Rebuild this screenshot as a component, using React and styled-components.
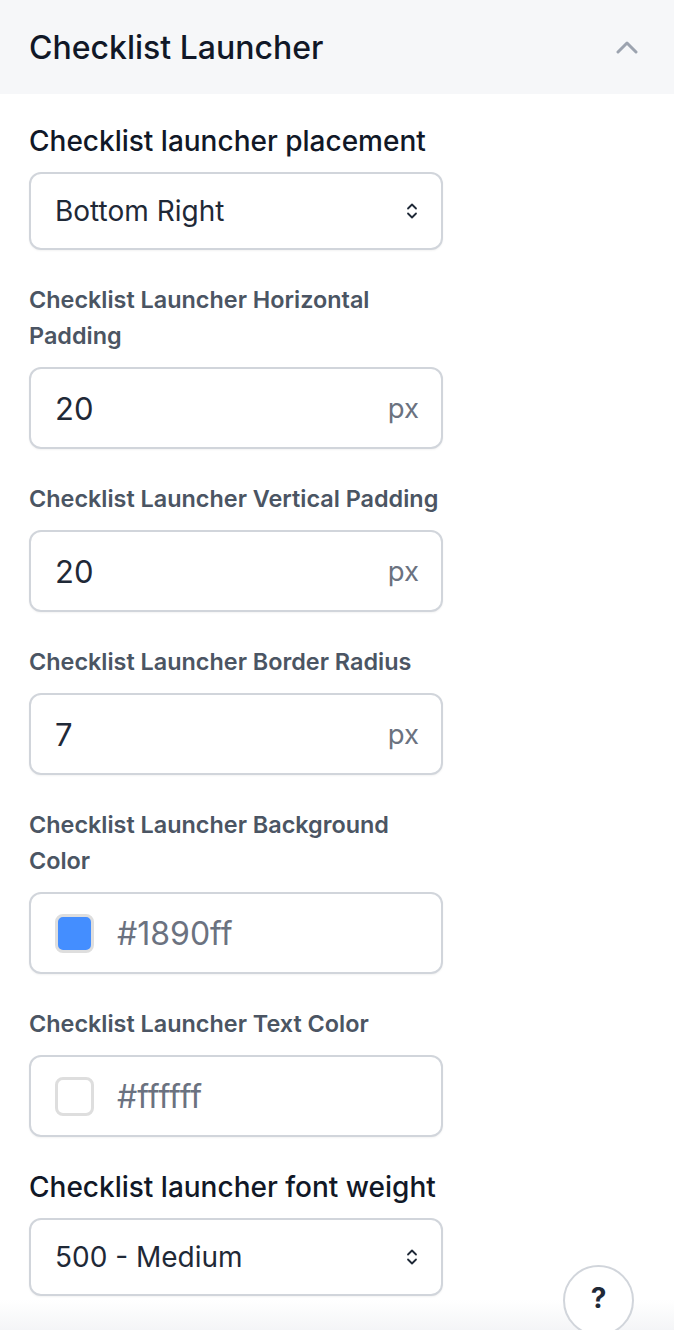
import React from "react";
import styled, { createGlobalStyle } from "styled-components";

const GlobalStyle = createGlobalStyle`
  html, body {
    margin: 0;
    padding: 0;
    background: #ffffff;
    font-family: Inter, "Noto Sans", sans-serif;
    -webkit-font-smoothing: antialiased;
  }
  * { box-sizing: border-box; }
`;

const Page = styled.div`
  position: relative;
  width: 674px;
  height: 1330px;
  overflow: hidden;
  background: #ffffff;
`;

const Header = styled.div`
  display: flex;
  align-items: center;
  justify-content: space-between;
  height: 94px;
  padding: 0 36px 0 29px;
  background: #f6f7f9;
`;

const Title = styled.h2`
  margin: 0;
  font-size: 32px;
  font-weight: 500;
  color: #111827;
`;

const Body = styled.div`
  display: flex;
  flex-direction: column;
  padding: 29px 29px 0;
`;

const Field = styled.div`
  display: flex;
  flex-direction: column;
  gap: 13px;
  width: 414px;
  margin-bottom: ${(p) => (p.$last ? "0" : "32px")};
`;

const Label = styled.div`
  font-size: ${(p) => (p.$big ? "28px" : "23.4px")};
  font-weight: ${(p) => (p.$big ? 500 : 600)};
  color: ${(p) => (p.$big ? "#111827" : "#4b5563")};
  line-height: 36px;
  margin-right: ${(p) => (p.$big ? "-40px" : "-4px")};
`;

const Box = styled.div`
  display: flex;
  align-items: center;
  height: ${(p) => (p.$select ? "78px" : "82px")};
  padding: 0 22px 0 24px;
  border: 2px solid #d1d5db;
  border-radius: 12px;
  background: #ffffff;
  box-shadow: 0 1px 2px rgba(0, 0, 0, 0.05);
  gap: 23px;
`;

const Value = styled.span`
  flex: 1;
  font-size: ${(p) => (p.$select ? "28px" : p.$muted ? "32px" : "31px")};
  color: ${(p) => (p.$muted ? "#6b7280" : "#1f2937")};
`;

const Unit = styled.span`
  font-size: 27.5px;
  color: #6b7280;
`;

const Swatch = styled.span`
  width: 39px;
  height: 39px;
  border-radius: 8px;
  border: 3px solid #dedede;
  background: ${(p) => p.$color};
  flex-shrink: 0;
`;

const HelpButton = styled.div`
  position: absolute;
  left: 563px;
  top: 1265px;
  width: 71px;
  height: 71px;
  border-radius: 50%;
  border: 2px solid #d1d5db;
  background: #ffffff;
  display: flex;
  align-items: center;
  justify-content: center;
  font-size: 28px;
  font-weight: 700;
  color: #1f2937;
  padding-bottom: 6px;
`;

const BottomFade = styled.div`
  position: absolute;
  left: 0;
  right: 0;
  bottom: 0;
  height: 30px;
  background: linear-gradient(to bottom, rgba(243, 244, 246, 0), rgba(243, 244, 246, 0.9));
  pointer-events: none;
`;

const ChevronUp = () => (
  <svg width="22" height="14" viewBox="0 0 22 14" fill="none">
    <path d="M2 12 L11 3 L20 12" stroke="#9ca3af" strokeWidth="3" strokeLinecap="round" strokeLinejoin="round" />
  </svg>
);

const UpDown = () => (
  <svg width="14" height="20" viewBox="0 0 14 20" fill="none">
    <path d="M3 7.5 L7 3.5 L11 7.5 M3 12.5 L7 16.5 L11 12.5" stroke="#1f2937" strokeWidth="1.8" strokeLinecap="round" strokeLinejoin="round" />
  </svg>
);

const fields = [
  { type: "select", big: true, label: "Checklist launcher placement", value: "Bottom Right" },
  { type: "unit", label: "Checklist Launcher Horizontal Padding", value: "20" },
  { type: "unit", label: "Checklist Launcher Vertical Padding", value: "20" },
  { type: "unit", label: "Checklist Launcher Border Radius", value: "7" },
  { type: "color", label: "Checklist Launcher Background Color", value: "#1890ff", swatch: "#448eff" },
  { type: "color", label: "Checklist Launcher Text Color", value: "#ffffff", swatch: "#ffffff" },
  { type: "select", big: true, label: "Checklist launcher font weight", value: "500 - Medium" },
];

export default function App() {
  return (
    <>
      <GlobalStyle />
      <Page>
        <Header>
          <Title>Checklist Launcher</Title>
          <ChevronUp />
        </Header>
        <Body>
          {fields.map((f, i) => (
            <Field key={i} $last={i === fields.length - 1}>
              <Label $big={f.big}>{f.label}</Label>
              {f.type === "select" && (
                <Box $select>
                  <Value $select>{f.value}</Value>
                  <UpDown />
                </Box>
              )}
              {f.type === "unit" && (
                <Box>
                  <Value>{f.value}</Value>
                  <Unit>px</Unit>
                </Box>
              )}
              {f.type === "color" && (
                <Box>
                  <Swatch $color={f.swatch} />
                  <Value $muted>{f.value}</Value>
                </Box>
              )}
            </Field>
          ))}
        </Body>
        <BottomFade />
        <HelpButton>?</HelpButton>
      </Page>
    </>
  );
}
